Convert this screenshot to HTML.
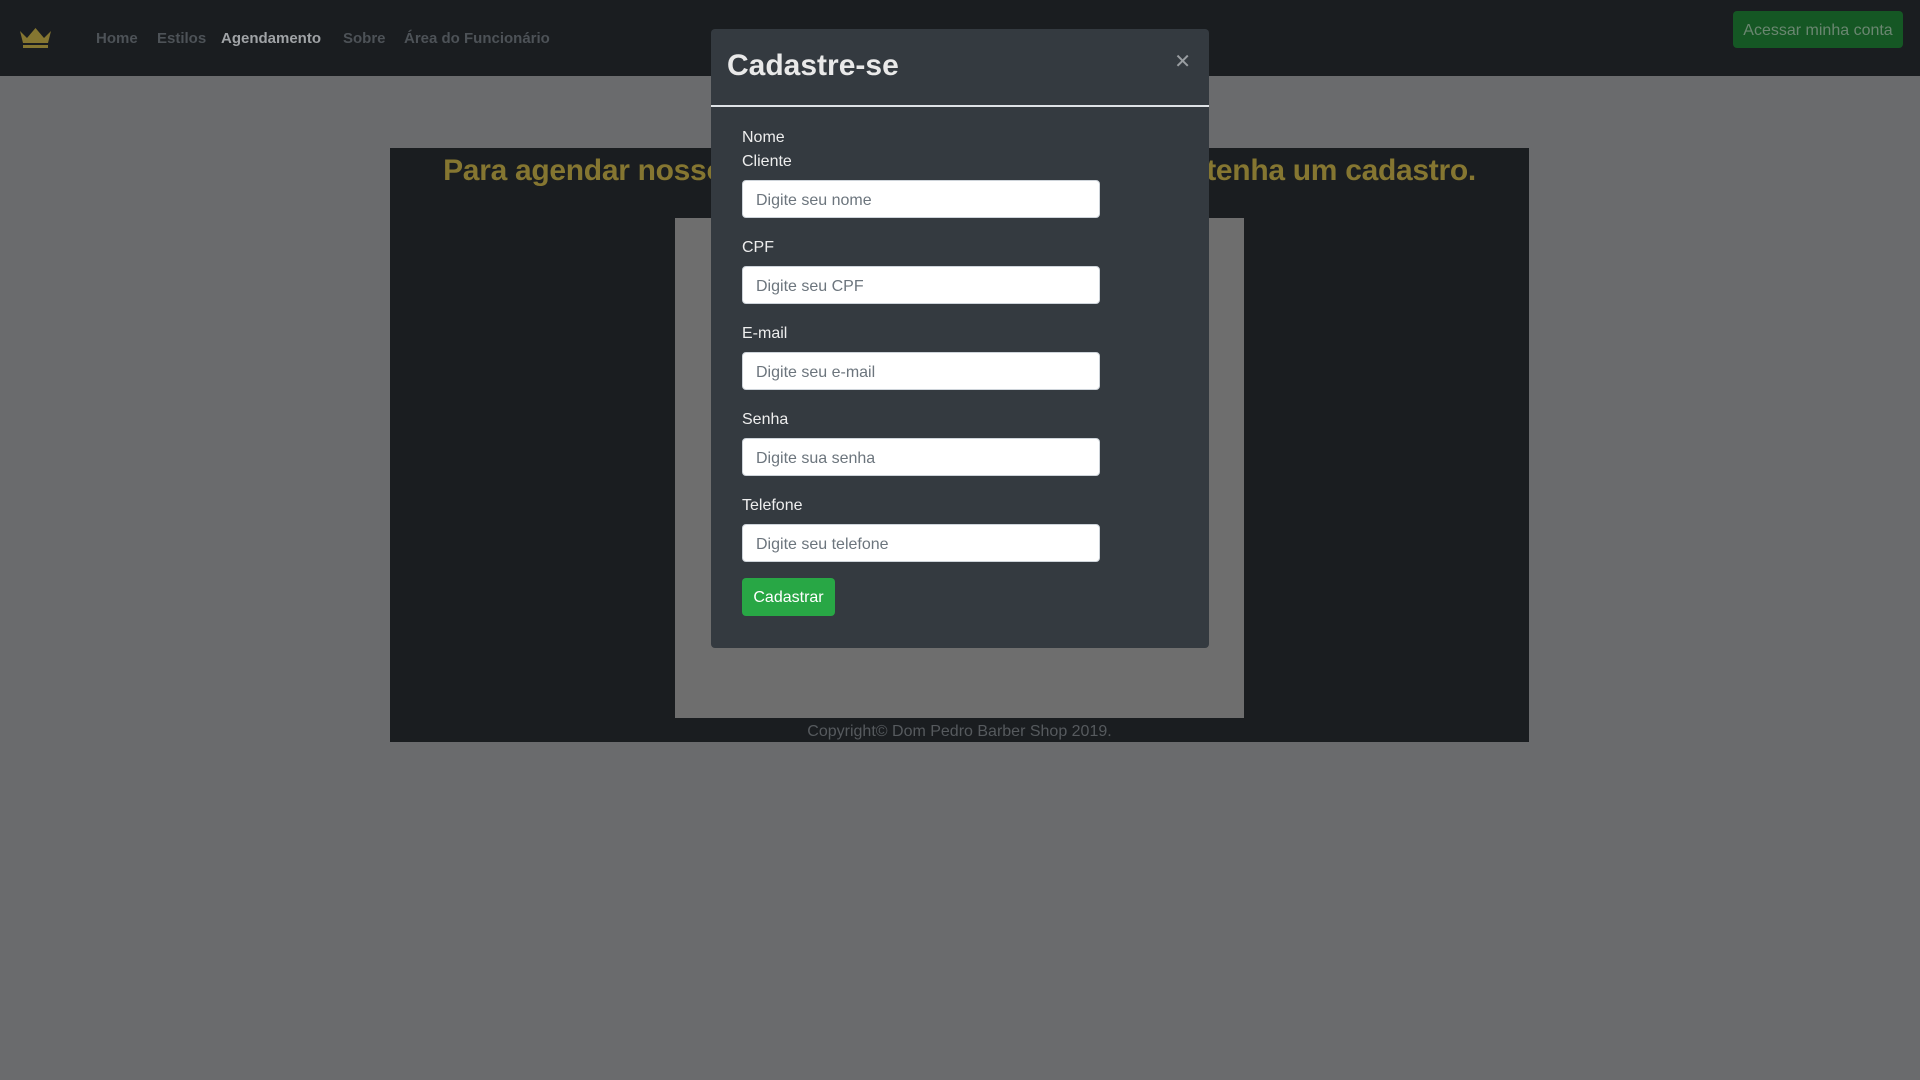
<!DOCTYPE html>
<html><head><meta charset="utf-8"><style>
*{box-sizing:border-box;margin:0;padding:0}
body{width:1920px;height:1080px;background:#6a6b6d;font-family:"Liberation Sans",sans-serif;position:relative;overflow:hidden}
.nav{position:absolute;left:0;top:0;width:1920px;height:76px;background:#1a1d20}
.nav a{position:absolute;top:30px;font-size:15px;font-weight:bold;color:#4d5257;text-decoration:none}
.acc{position:absolute;left:1733px;top:11px;width:170px;height:37px;background:#155724;border-radius:4px;color:#6a8670;font-size:16px;line-height:39px;text-align:center}
.box{position:absolute;left:390px;top:148px;width:1139px;height:594px;background:#1a1d20}
.h{position:absolute;left:0;width:100%;top:6px;text-align:center;color:#857631;font-size:30px;font-weight:bold;letter-spacing:-0.3px}
.inner{position:absolute;left:285px;top:70px;width:569px;height:500px;background:#6e6e6e}
.copy{position:absolute;left:0;width:100%;top:575px;text-align:center;color:#565a5e;font-size:16px}
.modal{position:absolute;left:711px;top:29px;width:498px;height:619px;background:#343a40;border-radius:4px}
.mh{height:78px;border-bottom:2px solid #dee2e6;position:relative}
.mh h2{position:absolute;left:16px;top:20px;font-size:30px;font-weight:bold;color:#e9e9e9}
.x{position:absolute;right:18px;top:20px;color:#9a9ea2;font-size:20px}
.l{position:absolute;left:31px;color:#eee;font-size:16px}
.i{position:absolute;left:31px;width:358px;height:38px;background:#fff;border:1px solid #ced4da;border-radius:4px;color:#6c757d;font-size:16px;line-height:39px;padding-left:13px}
.b{position:absolute;left:31px;top:549px;width:93px;height:38px;background:#28a745;border-radius:4px;color:#fff;font-size:16px;line-height:40px;text-align:center}
</style></head><body>
<div class="nav">
<svg style="position:absolute;left:19px;top:27px" width="33" height="22" viewBox="0 0 33 22"><path d="M1 4 L8 11 L16.5 1 L25 11 L32 4 L29 16 L4 16 Z" fill="#857631"/><rect x="4" y="18" width="25" height="3" fill="#857631"/></svg>
<a style="left:96px">Home</a><a style="left:157px">Estilos</a><a style="left:221px;color:#a0a3a6">Agendamento</a><a style="left:343px">Sobre</a><a style="left:404px">Área do Funcionário</a>
<div class="acc">Acessar minha conta</div>
</div>
<div class="box">
<div class="h">Para agendar nossos serviços, é necessário que você tenha um cadastro.</div>
<div class="inner"></div>
<div class="copy">Copyright© Dom Pedro Barber Shop 2019.</div>
</div>
<div class="modal">
<div class="mh"><h2>Cadastre-se</h2><div class="x">✕</div></div>
<div class="l" style="top:100px">Nome</div>
<div class="l" style="top:124px">Cliente</div>
<div class="i" style="top:151px">Digite seu nome</div>
<div class="l" style="top:210px">CPF</div>
<div class="i" style="top:237px">Digite seu CPF</div>
<div class="l" style="top:296px">E-mail</div>
<div class="i" style="top:323px">Digite seu e-mail</div>
<div class="l" style="top:382px">Senha</div>
<div class="i" style="top:409px">Digite sua senha</div>
<div class="l" style="top:468px">Telefone</div>
<div class="i" style="top:495px">Digite seu telefone</div>
<div class="b">Cadastrar</div>
</div>
</body></html>
